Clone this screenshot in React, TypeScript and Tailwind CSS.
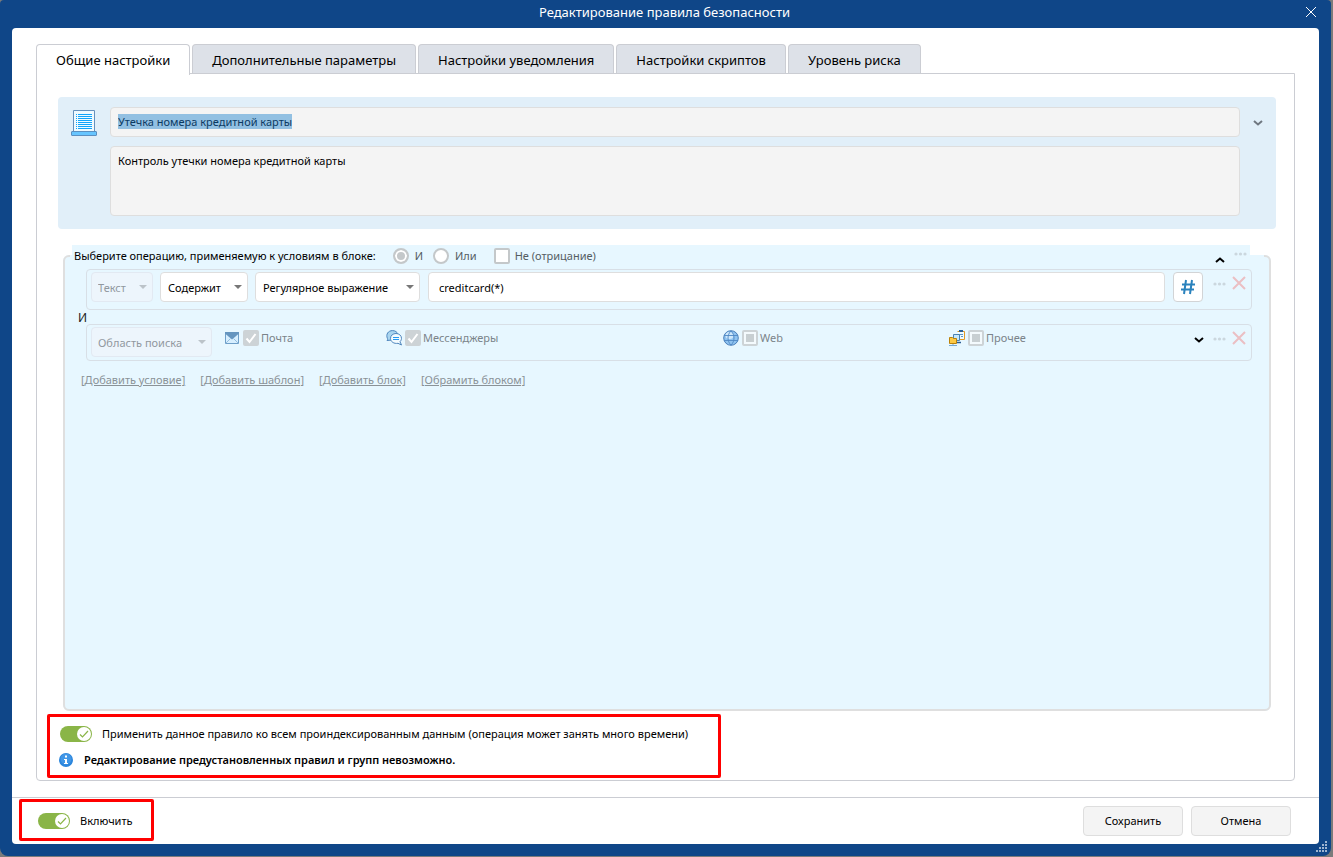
import { useEffect, useRef, useState } from "react";

const TABS = [
  "Общие настройки",
  "Дополнительные параметры",
  "Настройки уведомления",
  "Настройки скриптов",
  "Уровень риска",
];

const LINKS = ["[Добавить условие]", "[Добавить шаблон]", "[Добавить блок]", "[Обрамить блоком]"];

export default function App() {
  const [tab, setTab] = useState(0);
  const nameRef = useRef<HTMLInputElement>(null);

  useEffect(() => {
    nameRef.current?.focus();
    nameRef.current?.select();
  }, []);

  return (
    <div className="flex min-h-screen flex-col bg-[#7b7b7b] pr-0.5 pb-px font-['Noto_Sans','Open_Sans',sans-serif] text-[11px] leading-4 text-black">
      <div className="relative flex flex-1 flex-col rounded-t rounded-b-lg bg-[#0f4688] px-3 pb-3">
        <header className="flex h-7 items-center pb-1">
          <h1 className="flex-1 pl-4 text-center text-[13px] text-white">
            Редактирование правила безопасности
          </h1>
          <button type="button" aria-label="Закрыть" className="-mr-0.5 p-1 text-white">
            <svg width="12" height="12" viewBox="0 0 12 12" stroke="currentColor" strokeWidth="1">
              <path d="M1 1l10 10M11 1L1 11" />
            </svg>
          </button>
        </header>

        <main className="flex flex-1 flex-col rounded bg-white">
          <div className="flex flex-1 flex-col px-6 pt-4 pb-4">
            <div role="tablist" className="flex gap-0.5">
              {TABS.map((t, i) => (
                <button
                  key={t}
                  type="button"
                  role="tab"
                  aria-selected={tab === i}
                  onClick={() => setTab(i)}
                  className={
                    tab === i
                      ? "relative z-10 -mb-px h-[31px] rounded-t border border-b-0 border-[#cbcdd3] bg-white px-[19px] text-[13px]"
                      : "h-[30px] rounded-t border border-b-0 border-[#cbcdd3] bg-[#dde1e8] px-[19px] text-[13px]"
                  }
                >
                  {t}
                </button>
              ))}
            </div>

            <section className="-mt-px flex flex-1 flex-col rounded-b border border-[#cbcdd3] px-2.5 pt-[23px] pb-0.5">
              <RuleHeader nameRef={nameRef} />
              <ConditionBlock />

              <div className="mt-[3px] w-[674px] max-w-full rounded-xs border-3 border-[#ff0000] pt-[5px] pb-[3px] pl-2.5">
                <label className="flex h-6 items-center gap-2.5">
                  <Toggle />
                  Применить данное правило ко всем проиндексированным данным (операция может занять много времени)
                </label>
                <p className="mt-0.5 flex h-6 items-center gap-[11px] font-semibold">
                  <InfoIcon />
                  Редактирование предустановленных правил и групп невозможно.
                </p>
              </div>
            </section>
          </div>

          <footer className="flex items-center justify-between border-t border-[#cbcdd3] pt-px pr-7 pb-[3px] pl-[7px]">
            <label className="flex h-[42px] w-[135px] items-center gap-2.5 rounded-xs border-3 border-[#ff0000] pt-0.5 pl-4">
              <Toggle />
              Включить
            </label>
            <div className="mt-0.5 flex gap-2">
              <button type="button" className="h-[30px] w-[100px] rounded-sm border border-[#dedede] bg-[#f4f4f4]">
                Сохранить
              </button>
              <button type="button" className="h-[30px] w-[100px] rounded-sm border border-[#dedede] bg-[#f4f4f4]">
                Отмена
              </button>
            </div>
          </footer>
        </main>

        <ResizeGrip />
      </div>
    </div>
  );
}

function RuleHeader({ nameRef }: { nameRef: React.RefObject<HTMLInputElement | null> }) {
  return (
    <div className="mr-2 ml-[11px] flex items-start rounded-sm bg-[#e1eff9] pt-2.5 pb-[13px] pl-[13px]">
      <ServerIcon />
      <div className="ml-3 flex flex-1 flex-col gap-[9px]">
        <input
          ref={nameRef}
          readOnly
          aria-label="Название правила"
          defaultValue="Утечка номера кредитной карты"
          className="h-[30px] rounded border border-[#dedede] bg-[#f4f4f4] px-[7px] pb-0.5 outline-none selection:bg-[#92c0e2] selection:text-[#0b3a63]"
        />
        <textarea
          readOnly
          aria-label="Описание правила"
          defaultValue="Контроль утечки номера кредитной карты"
          className="h-[70px] resize-none rounded border border-[#dedede] bg-[#f4f4f4] px-[7px] py-1.5 outline-none"
        />
      </div>
      <button type="button" aria-label="Развернуть" className="mt-[13px] flex w-9 justify-center text-[#6f7780]">
        <Chevron />
      </button>
    </div>
  );
}

function ConditionBlock() {
  return (
    <fieldset className="mt-4 mr-[13px] ml-4 flex-1 rounded-md border-2 border-[#dfdfdf] bg-[#e7f7ff] px-[5px]">
      <legend className="w-full pr-[14px] pl-0.5">
        <div className="flex h-[21px] items-center bg-[#e7f7ff] pl-0.5">
          <span>Выберите операцию, применяемую к условиям в блоке:</span>
          <label className="ml-[17px] flex items-center gap-1.5 text-[#555d63]">
            <input
              type="radio"
              name="op"
              defaultChecked
              className="size-4 appearance-none rounded-full border-2 border-[#c4c8ca] bg-white checked:bg-[#c4c8ca] checked:shadow-[inset_0_0_0_2px_#fff]"
            />
            И
          </label>
          <label className="ml-2.5 flex items-center gap-1.5 text-[#555d63]">
            <input
              type="radio"
              name="op"
              className="size-4 appearance-none rounded-full border-2 border-[#c4c8ca] bg-white checked:bg-[#c4c8ca] checked:shadow-[inset_0_0_0_2px_#fff]"
            />
            Или
          </label>
          <label className="ml-[17px] flex items-center gap-[5px] text-[#555d63]">
            <input
              type="checkbox"
              className="size-4 appearance-none rounded-xs border-2 border-[#c4c8ca] bg-white checked:bg-[#c4c8ca]"
            />
            Не (отрицание)
          </label>
          <button type="button" aria-label="Свернуть блок" className="mt-2 mr-[9px] ml-auto rotate-180">
            <Chevron />
          </button>
          <MoreButton className="mr-[3px] mb-1" />
        </div>
      </legend>

      <div className="mt-[3px] mr-3 ml-4">
        <div className="flex items-start rounded border border-[#d8dfe6] pt-0.5 pr-[5px] pb-[7px] pl-1">
          <Dropdown label="Тип условия" value="Текст" className="w-[62px]" disabled />
          <Dropdown label="Оператор" value="Содержит" className="ml-[7px] w-[88px]" />
          <Dropdown label="Вид значения" value="Регулярное выражение" className="ml-[7px] w-[165px]" />
          <input
            aria-label="Значение"
            defaultValue="creditcard(*)"
            className="ml-2 h-[30px] min-w-0 flex-1 rounded border border-[#dedede] bg-white px-2.5 outline-none"
          />
          <button
            type="button"
            aria-label="Вставить шаблон"
            className="mr-2.5 ml-2 flex size-[30px] items-center justify-center rounded border border-[#d2d4d6] bg-white text-[#2a82bd]"
          >
            <svg width="16" height="16" viewBox="0 0 16 16" fill="none" stroke="currentColor" strokeWidth="2">
              <path d="M6 1L4 15M12 1l-2 14M2 5.5h13M1 10.5h13" />
            </svg>
          </button>
          <MoreButton className="mt-2" />
          <RemoveButton />
        </div>

        <div className="-ml-2 flex h-3.5 items-center pt-0.5 text-xs text-[#222]">И</div>

        <div className="flex items-start rounded border border-[#d8dfe6] pt-0.5 pr-[5px] pb-[3px] pl-1">
          <Dropdown label="Область" value="Область поиска" className="w-[121px]" disabled />
          <div className="ml-[13px] grid flex-1 grid-cols-[161fr_337fr_226fr_245fr] pt-px">
            <Scope label="Почта" state="checked" icon={<MailIcon />} />
            <Scope label="Мессенджеры" state="checked" icon={<ChatIcon />} />
            <Scope label="Web" state="partial" icon={<GlobeIcon />} />
            <Scope label="Прочее" state="partial" icon={<OtherIcon />} />
          </div>
          <button type="button" aria-label="Развернуть область" className="mt-2.5 mr-[9px]">
            <Chevron />
          </button>
          <MoreButton className="mt-2" />
          <RemoveButton />
        </div>
      </div>

      <nav className="mt-[11px] ml-[11px] flex gap-[15px]">
        {LINKS.map((l) => (
          <a key={l} href="#" className="text-[#8a9297] underline">
            {l}
          </a>
        ))}
      </nav>
    </fieldset>
  );
}

function Dropdown({
  label,
  value,
  className,
  disabled = false,
}: {
  label: string;
  value: string;
  className: string;
  disabled?: boolean;
}) {
  return (
    <div className={`relative h-[30px] shrink-0 ${className}`}>
      <select
        aria-label={label}
        disabled={disabled}
        className="size-full appearance-none rounded border border-[#dedede] bg-white pt-0.5 pl-[7px] text-black outline-none disabled:border-[#e2e9f2] disabled:bg-[#edf5fc] disabled:pl-1.5 disabled:text-[#91989f] disabled:opacity-100"
      >
        <option>{value}</option>
      </select>
      <svg
        className={`pointer-events-none absolute top-[13px] right-1.5 ${disabled ? "text-[#bcc3c9]" : "text-[#777]"}`}
        width="8"
        height="4"
        viewBox="0 0 8 4"
        fill="currentColor"
      >
        <path d="M0 0h8L4 4z" />
      </svg>
    </div>
  );
}

function Scope({ label, state, icon }: { label: string; state: "checked" | "partial"; icon: React.ReactNode }) {
  return (
    <label className="flex h-5 items-center text-[#7b848a]">
      {icon}
      <span className="relative mr-0.5 ml-[3px] size-4">
        <input
          type="checkbox"
          defaultChecked={state === "checked"}
          className="block size-4 appearance-none rounded-xs border-2 border-[#cdd3d6] bg-[#f4fafd] checked:bg-[#cdd3d6]"
        />
        <svg className="pointer-events-none absolute inset-0" width="16" height="16" viewBox="0 0 16 16" fill="none">
          {state === "checked" ? (
            <path d="M3.5 8.5l3 3.5 6-8" stroke="#fff" strokeWidth="2" />
          ) : (
            <path d="M4 4h8v8H4z" fill="#c8cfd2" />
          )}
        </svg>
      </span>
      {label}
    </label>
  );
}

function Toggle() {
  return (
    <span className="relative h-4 w-8">
      <input type="checkbox" role="switch" defaultChecked className="block h-4 w-8 appearance-none rounded-full bg-[#8ab547]" />
      <svg className="pointer-events-none absolute top-px right-px" width="14" height="14" viewBox="0 0 14 14" fill="none">
        <circle cx="7" cy="7" r="7" fill="#fff" />
        <path d="M3 7.5l2.5 2.5 5.5-6" stroke="#8ab547" strokeWidth="1.2" />
      </svg>
    </span>
  );
}

function MoreButton({ className }: { className: string }) {
  return (
    <button type="button" aria-label="Ещё" className={className}>
      <svg width="13" height="8" viewBox="0 0 13 8" fill="#cbd7de">
        <circle cx="2" cy="4" r="1.6" />
        <circle cx="6.5" cy="4" r="1.6" />
        <circle cx="11" cy="4" r="1.6" />
      </svg>
    </button>
  );
}

function RemoveButton() {
  return (
    <button type="button" aria-label="Удалить" className="mt-1 ml-1.5">
      <svg width="14" height="14" viewBox="0 0 14 14" stroke="#ebbfc3" strokeWidth="2">
        <path d="M1 1l12 12M13 1L1 13" />
      </svg>
    </button>
  );
}

function Chevron() {
  return (
    <svg width="10" height="6" viewBox="0 0 10 6" fill="none" stroke="currentColor" strokeWidth="2">
      <path d="M1 1l4 3.5L9 1" />
    </svg>
  );
}

function ServerIcon() {
  return (
    <svg className="mt-[3px] shrink-0" width="27" height="26" viewBox="0 0 27 26" fill="none">
      <path d="M2.5.5h21v21h-21z" fill="#f0faff" stroke="#6591bd" />
      <path
        d="M5 4.5h1M5 6.5h1M5 8.5h1M5 10.5h1M5 12.5h1M5 14.5h1M5 16.5h1M5 18.5h1M7 4.5h14M7 6.5h14M7 8.5h14M7 10.5h14M7 12.5h14M7 14.5h14M7 16.5h14M7 18.5h14"
        stroke="#12a5fb"
      />
      <rect x=".5" y="21.5" width="25" height="4" rx=".5" fill="#66c5ff" stroke="#5b8fc0" />
    </svg>
  );
}

function InfoIcon() {
  return (
    <svg className="-ml-px shrink-0" width="14" height="14" viewBox="0 0 14 14">
      <circle cx="7" cy="7" r="7" fill="#2c86dc" />
      <circle cx="7" cy="6" r="5.5" fill="#4196e6" />
      <path d="M6 2.5h2v2H6zM5 6h3v4h1v1H5v-1h1V7H5z" fill="#fff" />
    </svg>
  );
}

function MailIcon() {
  return (
    <svg className="mr-px" width="14" height="12" viewBox="0 0 14 12" fill="none">
      <path d="M.5.5h13v11H.5z" fill="#d7efff" stroke="#6e9fc9" />
      <path d="M0 0h14v1.5L7 7.5 0 1.5z" fill="#6595bf" />
      <path d="M1 11l4.5-4.5M13 11L8.5 6.5" stroke="#94bedf" />
    </svg>
  );
}

function ChatIcon() {
  return (
    <svg width="16" height="16" viewBox="0 0 16 16" fill="none" stroke="#4f86bd">
      <path d="M1 10.5c.8-.6.7-1.500.3-2.300C-.2 4.500 2 .6 6.500.6c2.700 0 4.700 1.400 5.500 3.700L6 10z" fill="#a9d5f0" />
      <path
        d="M10 3.500c3 0 5.500 2 5.500 4.800 0 1.400-.6 2.500-1.500 3.400l1.500 3.300-3.500-1.700c-4 .7-7.500-1.500-7.500-5C4.500 5.500 7 3.500 10 3.500z"
        fill="#f3fbff"
      />
      <path d="M7 7.500h6M7 9.500h6" stroke="#2799f3" />
    </svg>
  );
}

function GlobeIcon() {
  return (
    <svg width="16" height="16" viewBox="0 0 16 16" fill="none">
      <circle cx="8" cy="8" r="7.3" fill="#8fc3f0" stroke="#4a7fba" />
      <ellipse cx="6.5" cy="5.5" rx="4" ry="3.5" fill="#cfe8fb" />
      <path d="M1 5.5h14M1 10.5h14M8 1C4 4.5 4 11.500 8 15M8 1c4 3.500 4 10.500 0 14" stroke="#4f88c4" strokeWidth=".9" />
    </svg>
  );
}

function OtherIcon() {
  return (
    <svg width="16" height="16" viewBox="0 0 16 16" fill="none">
      <path d="M8.5 1.5h7v8h-5" fill="#eefaff" stroke="#e39a25" />
      <path d="M10 0h4v2h-4z" fill="#2c5f94" />
      <path d="M10 4.5h4M12 6.5h2" stroke="#5a96c8" />
      <path d="M4.5 4.5h6v6h-6z" fill="#c5e8fc" stroke="#4a81b0" />
      <path d="M8 12.5h4" stroke="#2c5f94" strokeWidth="1.5" />
      <path d="M.5 7.5h3l1 1h3v5h-7z" fill="#fcc945" stroke="#bb8208" />
      <path d="M4 14v1.5M0 15.5h8" stroke="#78a9d2" />
    </svg>
  );
}

function ResizeGrip() {
  return (
    <svg className="absolute right-1 bottom-1" width="11" height="11" viewBox="0 0 11 11" fill="#9db4d0">
      <path d="M9 0h2v2H9zM9 3h2v2H9zM6 3h2v2H6zM9 6h2v2H9zM6 6h2v2H6zM3 6h2v2H3zM9 9h2v2H9zM6 9h2v2H6zM3 9h2v2H3zM0 9h2v2H0z" />
    </svg>
  );
}
